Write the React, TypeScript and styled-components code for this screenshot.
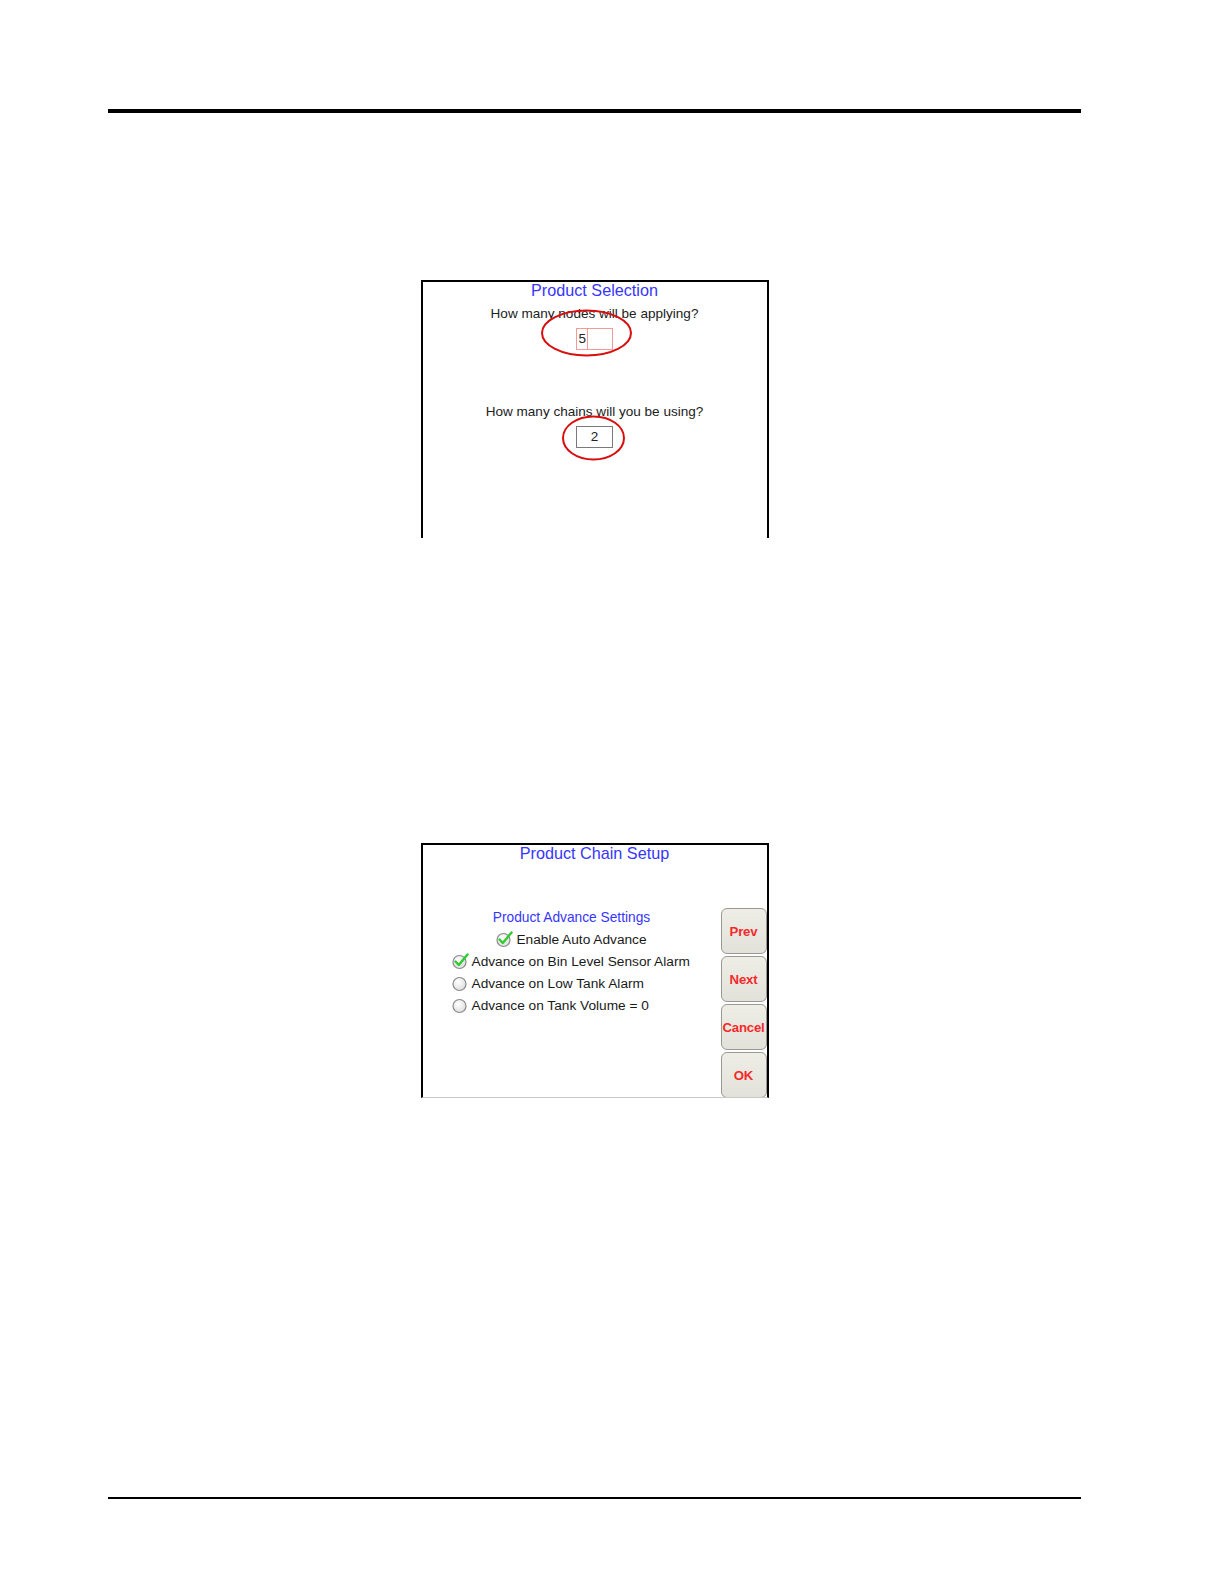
import styled, { createGlobalStyle } from "styled-components";

const GlobalStyle = createGlobalStyle`
  body {
    margin: 0;
    background: #fff;
    font-family: "Liberation Sans", Arial, sans-serif;
  }
`;

const Page = styled.div`
  width: 1224px;
  min-height: 1584px;
  padding: 109px 0 0 108px;
  box-sizing: border-box;
`;

const Content = styled.div`
  width: 973px;
  display: flex;
  flex-direction: column;
  align-items: center;
`;

const Rule = styled.div<{ $thick?: boolean }>`
  align-self: stretch;
  height: ${(p) => (p.$thick ? "4px" : "1.6px")};
  background: #000;
`;

const Screen = styled.div<{ $gap: number; $height: number; $bottomLine?: boolean }>`
  margin-top: ${(p) => p.$gap}px;
  width: 348px;
  height: ${(p) => p.$height}px;
  box-sizing: border-box;
  border: 2px solid #000;
  border-bottom: ${(p) => (p.$bottomLine ? "1px solid #c8c8c8" : "none")};
  display: flex;
  flex-direction: column;
  overflow: hidden;
`;

const Title = styled.div`
  margin-top: -2px;
  text-align: center;
  color: #3636ff;
  font-size: 16.2px;
  line-height: 20px;
`;

const Centered = styled.div`
  display: flex;
  flex-direction: column;
  align-items: center;
`;

const Question = styled.div<{ $gap: number }>`
  margin-top: ${(p) => p.$gap}px;
  font-size: 13.55px;
  line-height: 16px;
  color: #222;
`;

const InputWrap = styled.div`
  position: relative;
  margin-top: 6px;
  display: flex;
`;

const Cell = styled.div<{ $w: number; $tone: "pink" | "gray" }>`
  width: ${(p) => p.$w}px;
  height: 22px;
  box-sizing: border-box;
  border: 1.5px solid ${(p) => (p.$tone === "pink" ? "#f29a9a" : "#7a7a7a")};
  & + & {
    border-left: none;
  }
  display: flex;
  align-items: center;
  justify-content: center;
  font-size: 13.5px;
  color: #222;
`;

const Ring = styled.svg`
  position: absolute;
  pointer-events: none;
  overflow: visible;
`;

const Body = styled.div`
  margin-top: 43px;
  display: flex;
  align-items: flex-start;
`;

const Settings = styled.div`
  flex: 1;
  display: flex;
  flex-direction: column;
`;

const SettingsHead = styled.div`
  height: 22px;
  display: flex;
  align-items: center;
  justify-content: center;
  color: #3636ff;
  font-size: 13.75px;
`;

const Option = styled.div<{ $center?: boolean }>`
  height: 22px;
  display: flex;
  align-items: center;
  gap: 3px;
  justify-content: ${(p) => (p.$center ? "center" : "flex-start")};
  padding-left: ${(p) => (p.$center ? "0" : "29px")};
  font-size: 13.7px;
  color: #1a1a1a;
`;

const Buttons = styled.div`
  margin-top: 2px;
  width: 46px;
  display: flex;
  flex-direction: column;
  gap: 2px;
`;

const Key = styled.div`
  height: 46px;
  box-sizing: border-box;
  border: 1.5px solid #9a9a94;
  border-radius: 6px;
  background: linear-gradient(#eeeee7, #e2e2da);
  display: flex;
  align-items: center;
  justify-content: center;
  color: #f52a2a;
  font-size: 13.2px;
  font-weight: bold;
  letter-spacing: -0.2px;
`;

const Mark = ({ checked }: { checked: boolean }) => (
  <svg width="17" height="17" viewBox="0 0 17 17">
    <defs>
      <radialGradient id="rb" cx="40%" cy="35%" r="70%">
        <stop offset="0%" stopColor="#ffffff" />
        <stop offset="100%" stopColor="#dcdcdc" />
      </radialGradient>
    </defs>
    <circle cx="7.5" cy="9" r="6.5" fill="url(#rb)" stroke="#8a8a8a" strokeWidth="1.2" />
    {checked && (
      <path
        d="M3.5 8.5 L6.8 12 L15.5 1.5"
        fill="none"
        stroke="#2ecc2e"
        strokeWidth="2.4"
        strokeLinecap="round"
        strokeLinejoin="round"
      />
    )}
  </svg>
);

const options = [
  { label: "Advance on Bin Level Sensor Alarm", checked: true },
  { label: "Advance on Low Tank Alarm", checked: false },
  { label: "Advance on Tank Volume = 0", checked: false },
];

const App = () => (
  <>
    <GlobalStyle />
    <Page>
      <Content>
        <Rule $thick />

        <Screen $gap={167} $height={258}>
          <Title>Product Selection</Title>
          <Centered>
            <Question $gap={5.5}>How many nodes will be applying?</Question>
            <InputWrap>
              <Cell $w={12} $tone="pink">5</Cell>
              <Cell $w={24.5} $tone="pink" />
              <Ring width="91" height="46" style={{ left: -35, top: -18 }}>
                <ellipse cx="45.5" cy="23" rx="44.5" ry="22.5" fill="none" stroke="#d90d0d" strokeWidth="2" />
              </Ring>
            </InputWrap>
            <Question $gap={54}>How many chains will you be using?</Question>
            <InputWrap>
              <Cell $w={36.5} $tone="gray">2</Cell>
              <Ring width="63" height="44" style={{ left: -14, top: -10 }}>
                <ellipse cx="31.5" cy="22" rx="30.5" ry="21.5" fill="none" stroke="#d90d0d" strokeWidth="2" />
              </Ring>
            </InputWrap>
          </Centered>
        </Screen>

        <Screen $gap={305} $height={255} $bottomLine>
          <Title>Product Chain Setup</Title>
          <Body>
            <Settings>
              <SettingsHead>Product Advance Settings</SettingsHead>
              <Option $center>
                <Mark checked />
                Enable Auto Advance
              </Option>
              {options.map((o) => (
                <Option key={o.label}>
                  <Mark checked={o.checked} />
                  {o.label}
                </Option>
              ))}
            </Settings>
            <Buttons>
              <Key>Prev</Key>
              <Key>Next</Key>
              <Key>Cancel</Key>
              <Key>OK</Key>
            </Buttons>
          </Body>
        </Screen>

        <Rule style={{ marginTop: 399 }} />
      </Content>
    </Page>
  </>
);

export default App;
